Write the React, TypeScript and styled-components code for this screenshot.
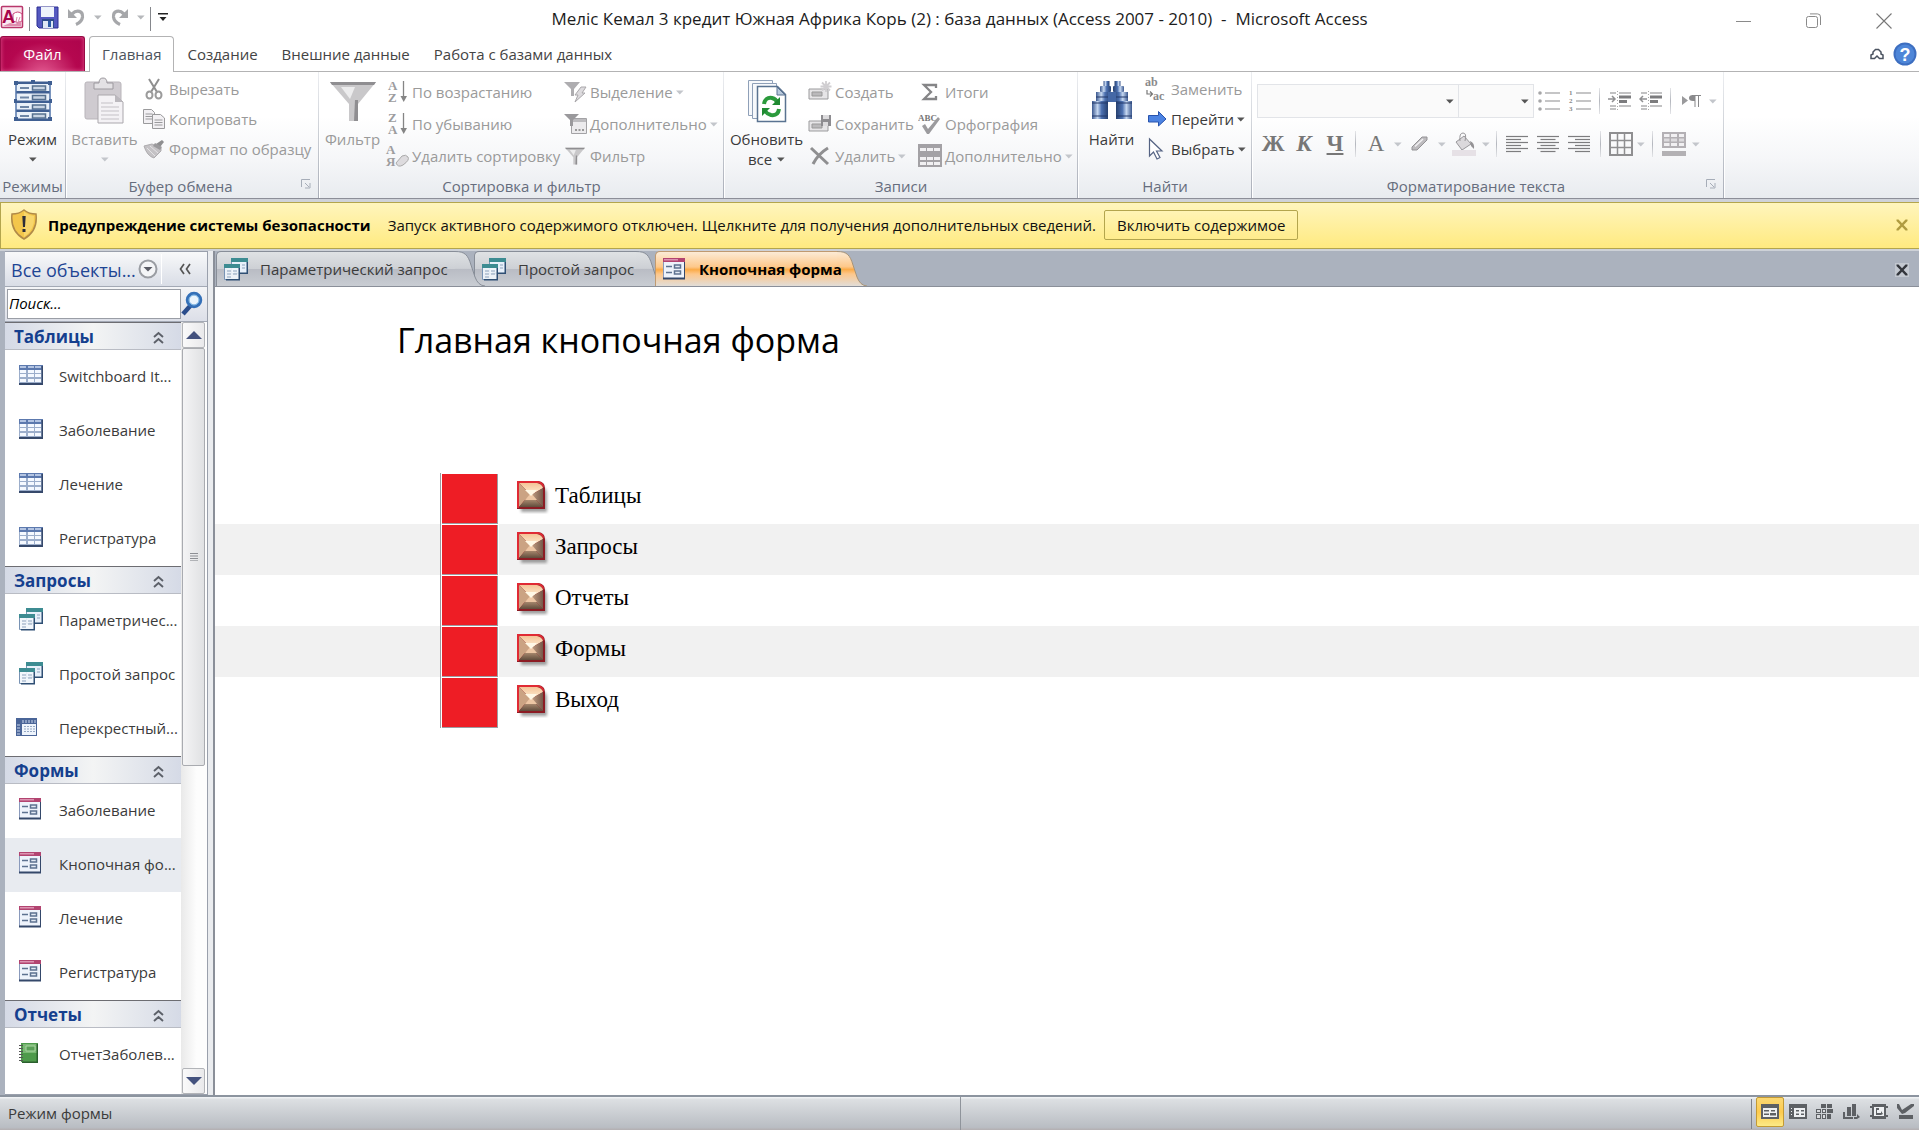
import React from "react";
import styled, { createGlobalStyle, css } from "styled-components";

const GlobalStyle = createGlobalStyle`
  *, *::before, *::after { box-sizing: border-box; }
  body { margin: 0; background: #fff; }
  body, button, input, select {
    font-family: "Open Sans", "Noto Sans", sans-serif;
    font-size: 15px;
    line-height: 20px;
    color: #3b3b3b;
  }
  button { border: 0; padding: 0; background: none; white-space: nowrap; }
  svg { display: block; flex: none; }
`;

const Screen = styled.div`
  height: 100vh;
  display: flex;
  flex-direction: column;
  overflow: hidden;
  background: #fff;
`;

/* ---------- title bar ---------- */

const TitleBar = styled.header`
  flex: none;
  height: 36px;
  display: grid;
  grid-template-columns: 1fr auto 1fr;
  align-items: center;
`;
const QuickAccess = styled.div`
  display: flex;
  align-items: center;
  height: 30px;
  padding-bottom: 2px;
`;
const QuickButton = styled.button<{ $w: number }>`
  width: ${(p) => p.$w}px;
  height: 28px;
  display: flex;
  align-items: center;
  justify-content: center;
`;
const QuickDivider = styled.span`
  width: 1px;
  height: 24px;
  margin: 4px 5px 0;
  background: #85878c;
`;
const Title = styled.h1`
  margin: 0;
  padding-top: 2px;
  font-size: 17px;
  font-weight: 400;
  line-height: 24px;
  white-space: pre;
  color: #1c1c1c;
`;
const WindowControls = styled.div`
  display: flex;
  justify-content: flex-end;
`;
const WindowButton = styled.button`
  width: 70px;
  height: 36px;
  display: flex;
  align-items: center;
  justify-content: center;
  padding-top: 6px;
`;

/* ---------- ribbon tabs ---------- */

const TabStrip = styled.nav`
  flex: none;
  height: 36px;
  display: flex;
  align-items: stretch;
  border-bottom: 1px solid #b3b3b4;
`;
const FileTab = styled.button`
  width: 85px;
  color: #fff;
  border: 1px solid #980b45;
  border-bottom: 0;
  border-radius: 3px 3px 0 0;
  background: radial-gradient(ellipse at 50% 110%, #e0588f 0, #b5074f 60%, #ac044b 100%);
  box-shadow: inset 0 0 4px #e2508c;
`;
const RibbonTab = styled.button<{ $active?: boolean }>`
  padding: 0 12px;
  color: #444;
  ${(p) =>
    p.$active &&
    css`
      margin: 0 1px -1px 4px;
      padding: 0 12px 1px;
      color: #4c535c;
      background: #fff;
      border: 1px solid #b3b3b4;
      border-bottom: 0;
      border-radius: 4px 4px 0 0;
    `}
`;
const TabStripEnd = styled.div`
  margin-left: auto;
  display: flex;
  align-items: center;
  gap: 9px;
  padding-right: 2px;
`;

/* ---------- ribbon ---------- */

const Ribbon = styled.section`
  flex: none;
  height: 130px;
  display: flex;
  border-bottom: 3px solid #cfd2d9;
  background: linear-gradient(#8c8e98, #8c8e98) bottom / 100% 1px no-repeat,
    linear-gradient(#fff 0, #fff 35%, #f5f6f8 70%, #e8ebef 100%);
`;
const Group = styled.div<{ $w: number }>`
  flex: none;
  width: ${(p) => p.$w}px;
  display: flex;
  flex-direction: column;
  padding-right: 2px;
  background: linear-gradient(#eceef1, #a9aeb8) right 1px top / 1px calc(100% - 1px) no-repeat,
    linear-gradient(#fff, #fff) right / 1px calc(100% - 2px) no-repeat;
`;
const GroupBody = styled.div`
  height: 104px;
  display: flex;
`;
const GroupFooter = styled.div<{ $launcher?: boolean }>`
  position: relative;
  padding-right: ${(p) => (p.$launcher ? 24 : 0)}px;
  text-align: center;
  line-height: 20px;
  color: #666d7d;
`;
const Launcher = styled.button`
  position: absolute;
  right: 7px;
  top: 3px;
`;
const LargeButton = styled.button<{ $w: number; $off?: boolean }>`
  flex: none;
  width: ${(p) => p.$w}px;
  height: 100px;
  display: flex;
  flex-direction: column;
  align-items: center;
  padding-top: 8px;
  color: ${(p) => (p.$off ? "#9a9a9a" : "#3b3b3b")};
`;
const LargeIcon = styled.span`
  flex: none;
  height: 42px;
  margin-bottom: 7px;
  display: flex;
  align-items: center;
`;
const ArrowLine = styled.span`
  height: 20px;
  display: flex;
  align-items: center;
  gap: 5px;
`;
const Column = styled.div<{ $row: number; $w?: number }>`
  flex: none;
  width: ${(p) => (p.$w ? p.$w + "px" : "auto")};
  display: grid;
  grid-auto-rows: ${(p) => p.$row}px;
  align-content: start;
  justify-items: start;
  padding-top: ${(p) => (p.$row === 30 ? 2 : 4)}px;
`;
const SmallButton = styled.button<{ $off?: boolean }>`
  display: flex;
  align-items: center;
  gap: 3px;
  color: ${(p) => (p.$off ? "#9a9a9a" : "#3b3b3b")};
`;

const Format = styled.div`
  padding: 12px 0 0 4px;
`;
const ToolRow = styled.div`
  display: flex;
  align-items: center;
  height: 34px;
  & + & { margin-top: 9px; }
`;
const Combo = styled.label<{ $w: number }>`
  position: relative;
  width: ${(p) => p.$w}px;
  height: 34px;
  & + & { margin-left: -1px; }
  select {
    width: 100%;
    height: 100%;
    appearance: none;
    border: 1px solid #e2e4e8;
    border-radius: 0;
    background: #fafafa;
  }
  svg { position: absolute; right: 5px; top: 15px; }
`;
const Tool = styled.button<{ $w: number }>`
  width: ${(p) => p.$w}px;
  height: 30px;
  display: flex;
  align-items: center;
  justify-content: center;
`;
const Glyph = styled.span<{ $light?: boolean }>`
  font-family: "Liberation Serif", serif;
  font-size: 23px;
  font-weight: ${(p) => (p.$light ? 400 : 700)};
  line-height: 24px;
  color: #777;
`;
const ToolDivider = styled.span<{ $w: number }>`
  width: ${(p) => p.$w}px;
  height: 26px;
  background: linear-gradient(#e4e5e8, #b4b7be, #e4e5e8) center / 1px 100% no-repeat;
`;

/* ---------- message bar ---------- */

const MessageBar = styled.section`
  flex: none;
  height: 47px;
  display: flex;
  align-items: center;
  padding: 0 10px 1px 9px;
  border: 1px solid #b3a54d;
  border-right: 0;
  background: linear-gradient(#fff5bd, #ffea80);
  color: #111;
  strong { margin: 0 17px 0 10px; color: #000; }
`;
const EnableButton = styled.button`
  height: 30px;
  margin-left: 8px;
  padding: 0 12px;
  border: 1px solid #b3a54d;
  border-radius: 2px;
  background: linear-gradient(#fff4b5, #ffec8c);
  color: #111;
`;
const BarClose = styled.button`
  margin-left: auto;
`;

/* ---------- workspace ---------- */

const Workspace = styled.main`
  flex: 1;
  min-height: 0;
  display: flex;
  border-top: 2px solid #cdd1d7;
  background: #abb2be;
  padding-left: 5px;
`;
const NavPane = styled.aside`
  flex: none;
  width: 203px;
  display: flex;
  flex-direction: column;
  border: 1px solid #9aa0ac;
  border-left: 0;
  background: #fff;
`;
const NavHeader = styled.div`
  flex: none;
  height: 35px;
  display: flex;
  align-items: center;
  padding-left: 6px;
  border-bottom: 1px solid #a3a9b5;
  background: linear-gradient(#f8f9fa, #d9dde6);
`;
const NavTitle = styled.button`
  flex: 1;
  display: flex;
  align-items: center;
  justify-content: space-between;
  font-size: 18px;
  line-height: 26px;
  color: #1e4594;
  > span { padding-top: 2px; }
`;
const NavCollapse = styled.button`
  width: 46px;
  height: 30px;
  margin-left: 3px;
  border-left: 1px solid #fff;
  display: flex;
  align-items: center;
  justify-content: center;
`;
const SearchRow = styled.div`
  flex: none;
  height: 35px;
  display: flex;
  align-items: center;
  padding-left: 2px;
  border-bottom: 1px solid #a3a9b5;
  background: linear-gradient(#f4f5f7, #dcdfe8);
`;
const SearchInput = styled.input`
  width: 174px;
  height: 30px;
  padding: 0 1px 3px;
  border: 1px solid #9a9ea6;
  background: #fff;
  font-style: italic;
  color: #000;
  &::placeholder { color: #000; opacity: 1; }
`;
const NavBody = styled.div`
  flex: 1;
  min-height: 0;
  display: flex;
`;
const NavList = styled.div`
  flex: 1;
  min-width: 0;
  overflow: hidden;
`;
const CategoryHeader = styled.button`
  width: 100%;
  height: 28px;
  display: flex;
  align-items: center;
  justify-content: space-between;
  padding: 2px 17px 0 9px;
  border-top: 1px solid #6d6d72;
  border-bottom: 1px solid #b9bcc4;
  background: linear-gradient(90deg, #d5dae6, #f3f4f4 50%, #d5dae6);
  font-size: 17px;
  font-weight: 700;
  color: #153f8e;
`;
const CategoryItems = styled.ul`
  list-style: none;
  margin: 0;
  padding: 0;
`;
const NavItem = styled.button<{ $selected?: boolean }>`
  width: 100%;
  height: 54px;
  display: grid;
  grid-template-columns: 40px 1fr;
  align-items: center;
  padding: 0 0 2px 14px;
  text-align: left;
  background: ${(p) => (p.$selected ? "#e8ebf0" : "#fff")};
  svg { margin-bottom: 2px; }
`;
const ScrollBar = styled.div`
  flex: none;
  width: 26px;
  display: flex;
  flex-direction: column;
  padding: 0 2px 0 1px;
  background: linear-gradient(90deg, #e9e9e9, #fdfdfd 60%);
`;
const ScrollButton = styled.button`
  flex: none;
  height: 26px;
  display: flex;
  align-items: center;
  justify-content: center;
  border: 1px solid #b2b4b8;
  border-radius: 2px;
  background: linear-gradient(90deg, #fafafa, #e9e9eb);
`;
const Thumb = styled.div`
  height: 418px;
  margin-bottom: auto;
  display: flex;
  align-items: center;
  justify-content: center;
  border: 1px solid #a9abb0;
  border-radius: 2px;
  background: linear-gradient(90deg, #f4f4f5, #e0e1e3);
`;
const Splitter = styled.div`
  flex: none;
  width: 7px;
  border-right: 2px solid #8a8f99;
  background: #eaecef;
`;
const Documents = styled.section`
  flex: 1;
  min-width: 0;
  display: flex;
  flex-direction: column;
`;
const DocTabs = styled.div`
  flex: none;
  height: 36px;
  display: flex;
  align-items: flex-end;
  padding-left: 1px;
  border-bottom: 1px solid #8a8f99;
`;
const greyTab = "linear-gradient(#dfe2e4, #cdd0d5 49%, #b9bcc4 51%, #c9cdd3)";
const activeTab = "linear-gradient(#fcebd6, #fdc88a 44%, #fbab48 52%, #fdc78b 65%, #e1ddd8)";
const DocTab = styled.button<{ $w: number; $z: number; $active?: boolean }>`
  position: relative;
  z-index: ${(p) => p.$z};
  flex: none;
  width: ${(p) => p.$w}px;
  height: 35px;
  margin-right: 19px;
  display: flex;
  align-items: center;
  gap: 12px;
  padding-left: 7px;
  border: 1px solid ${(p) => (p.$active ? "#c09a70" : "#888e98")};
  border-width: 1px 0 0 1px;
  border-top-left-radius: 5px;
  background: ${(p) => (p.$active ? activeTab : greyTab)};
  color: ${(p) => (p.$active ? "#000" : "#3b3b3b")};
  font-weight: ${(p) => (p.$active ? 700 : 400)};
  > span { position: relative; z-index: 1; }
`;
const TabTail = styled.svg`
  position: absolute;
  left: 100%;
  top: -1px;
`;
const DocClose = styled.button`
  margin: 0 10px 9px auto;
`;
const FormPage = styled.div`
  flex: 1;
  min-height: 0;
  background: #fff;
`;
const FormTitle = styled.h2`
  margin: 0;
  padding: 29px 0 95px 182px;
  font-size: 34px;
  line-height: 48px;
  font-weight: 400;
  color: #000;
`;
const MenuList = styled.ul`
  list-style: none;
  margin: 14px 0 0;
  padding: 0;
`;
const MenuRow = styled.li`
  height: 51px;
  padding-left: 225px;
  display: flex;
  &:nth-child(even) { background: #f1f1f1; }
`;
const RedCell = styled.span`
  width: 58px;
  border-left: 1px solid #9c9ca2;
  padding: 1px 0 0 1px;
  &::before {
    content: "";
    display: block;
    height: 50px;
    background: #ee1d25;
    border: 1px solid #9c9ca2;
    border-width: 0 1px 1px 0;
    outline: 1px solid #fff;
  }
`;
const MenuButton = styled.button`
  margin-left: 19px;
  padding-bottom: 5px;
  display: flex;
  align-items: center;
  gap: 5px;
  font-family: "Liberation Serif", serif;
  font-size: 23px;
  line-height: 26px;
  color: #000;
  svg { margin-top: 3px; }
`;

/* ---------- status bar ---------- */

const StatusBar = styled.footer`
  flex: none;
  height: 35px;
  display: flex;
  align-items: center;
  border-top: 2px solid #8c949f;
  background: linear-gradient(#f4f6f8 0, #dcdfe2 8%, #b9bdc3 92%, #b3aeb0 100%);
`;
const StatusText = styled.span`
  flex: 1;
  padding: 0 0 2px 8px;
`;
const StatusHalf = styled.div`
  width: 50%;
  height: 100%;
  display: flex;
  align-items: center;
  justify-content: flex-end;
  border-left: 1px solid #8f949b;
`;
const ViewDivider = styled.span`
  width: 1px;
  height: 30px;
  margin-right: 4px;
  background: #7e828a;
`;
const ViewButton = styled.button<{ $active?: boolean }>`
  width: 27px;
  height: 30px;
  display: flex;
  align-items: center;
  justify-content: center;
  margin-bottom: 3px;
  ${(p) =>
    p.$active &&
    css`
      width: 28px;
      border: 1px solid #c39a34;
      border-radius: 2px;
      background: linear-gradient(#fbd873, #fdca4e 50%, #fdea86);
    `}
`;

/* ---------- icons ---------- */

const Arrow = ({ c = "#555" }: { c?: string }) => (
  <svg width="8" height="5" viewBox="0 0 8 5"><path d="M0 0.5h7.6L3.8 4.6z" fill={c} /></svg>
);
const dim = "#c3c6cb";

const AccessLogo = () => (
  <svg width="24" height="24" viewBox="0 0 24 24">
    <rect x="1.500" y="1.500" width="21" height="21" rx="1" fill="#fbe9f0" stroke="#b8376b" strokeWidth="1.500" />
    <path d="M13 9q5-4 9 0v7q-4 3-9 0z" fill="#fff" stroke="#c9477c" strokeWidth="1" />
    <path d="M3 21h18v-5l-6 3-5-1z" fill="#e08fb0" />
    <path d="M17 12l-1 5M20 12l-3 8" stroke="#d98aab" />
    <text x="2" y="18" fontFamily="Liberation Sans, sans-serif" fontSize="18" fontWeight="700" fill="#a8064a">A</text>
  </svg>
);
const SaveIcon = () => (
  <svg width="23" height="23" viewBox="0 0 23 23">
    <path d="M1 1h21v21H3l-2-2z" fill="#5459c0" stroke="#2c2f91" />
    <path d="M5 1h13v10H5z" fill="#eef3fb" /><path d="M6 13h12v9H6z" fill="#2f4d8c" />
    <path d="M7 15h10v7H7z" fill="#dfe8f4" /><path d="M12 15h3v6h-3z" fill="#2c5ba6" />
  </svg>
);
const UndoIcon = ({ flip }: { flip?: boolean }) => (
  <svg width="18" height="18" viewBox="0 0 18 18">
    <g transform={flip ? "matrix(-1 0 0 1 18 0)" : undefined}>
      <path d="M5 6C10 1 16 3 15.500 9c-.5 4-3 6-6.500 7.500" fill="none" stroke="#a6a7aa" strokeWidth="3.200" />
      <path d="M1 1v9h9z" fill="#a6a7aa" />
    </g>
  </svg>
);
const CustomizeIcon = () => (
  <svg width="10" height="10" viewBox="0 0 10 10"><path d="M0 1h10v1.500H0zM1.500 5h7L5 9z" fill="#222" /></svg>
);
const MinimizeIcon = () => (
  <svg width="16" height="16" viewBox="0 0 16 16"><path d="M0 8.500h15" stroke="#8a8a8a" /></svg>
);
const RestoreIcon = () => (
  <svg width="16" height="16" viewBox="0 0 16 16" fill="none" stroke="#8a8a8a">
    <rect x="0.500" y="3.500" width="11" height="11" rx="2" /><path d="M4 .9h7.500q3 0 3 3V12" />
  </svg>
);
const CloseIcon = () => (
  <svg width="16" height="16" viewBox="0 0 16 16"><path d="M.5.5l15 15M15.500.5l-15 15" stroke="#777" strokeWidth="1.100" /></svg>
);
const MinRibbonIcon = () => (
  <svg width="14" height="12" viewBox="0 0 14 12" fill="#fff" stroke="#4b5360" strokeWidth="1.500">
    <path d="M1 10.500V7l2-1V4l2.500-2.500h3L11 4v2l2 1v3.500H9.500L7 8l-2.500 2.500z" />
  </svg>
);
const HelpIcon = () => (
  <svg width="24" height="24" viewBox="0 0 24 24">
    <circle cx="12" cy="12" r="11.500" fill="#3d6ec0" /><circle cx="12" cy="12" r="9.500" fill="#4e86d8" />
    <text x="12" y="18.500" textAnchor="middle" fontFamily="Liberation Sans, sans-serif" fontWeight="700" fontSize="18" fill="#fff">?</text>
  </svg>
);
const ModeIcon = () => (
  <svg width="40" height="42" viewBox="0 0 40 42">
    <rect x="3" y="3" width="35" height="37" fill="#eaf1f9" />
    {[3, 12.5, 22, 31].map((y) => (
      <g key={y}>
        <rect x="3" y={y - 1.5} width="34" height="2.500" fill="#3f5f92" />
        <path d={`M7 ${y + 4}h9v2H7z`} fill="#6e86a6" />
        <rect x="19.500" y={y + 3} width="13" height="4" fill="#c8d4e3" stroke="#56708f" strokeWidth="1.500" />
      </g>
    ))}
    <rect x="3" y="38.500" width="34" height="2.500" fill="#3f5f92" />
    <path d="M3 2v38M37 2v38" stroke="#5577aa" strokeWidth="1.500" />
    <path d="M1 1h4v4H1zM35 1h4v4h-4zM1 37h4v4H1zM35 37h4v4h-4zM1 19h3v4H1zM36 19h3v4h-3zM18 0h4v3h-4z" fill="#3f5f92" />
  </svg>
);
const PasteIcon = () => (
  <svg width="42" height="48" viewBox="0 0 42 48">
    <rect x="1" y="5" width="36" height="37" rx="2" fill="#cfcbd0" stroke="#b9b5ba" />
    <path d="M10 9V6h5q0-5 4-5t4 5h6v6H10z" fill="#e3e1e4" stroke="#9c999e" />
    <path d="M14 18h17l8 7v21H14z" fill="#f4f2f5" stroke="#aaa7ac" />
    <path d="M31 18v7h8z" fill="#bbb8bd" />
    <path d="M17 26h12M17 30h18M17 34h18M17 38h18M17 42h18" stroke="#c4c1c6" />
  </svg>
);
const CutIcon = () => (
  <svg width="24" height="22" viewBox="0 0 24 22">
    <path d="M7 1l8 13M17 1L9 14" stroke="#8f8f8f" strokeWidth="2" />
    <ellipse cx="7.500" cy="17" rx="3" ry="3.500" fill="none" stroke="#9b9b9b" strokeWidth="2" />
    <ellipse cx="16.500" cy="17" rx="3" ry="3.500" fill="none" stroke="#9b9b9b" strokeWidth="2" />
  </svg>
);
const CopyIcon = () => (
  <svg width="24" height="22" viewBox="0 0 24 22" fill="#f2f0f3" stroke="#9a9a9c">
    <path d="M1.500 1.500h8l3 3v11h-11z" /><path d="M3.500 6h7M3.500 8.500h7M3.500 11h7" />
    <path d="M10.500 6.500h8l4 3.500v10.500h-12z" /><path d="M12.500 12h8M12.500 14.500h8M12.500 17h8" />
  </svg>
);
const BrushIcon = () => (
  <svg width="24" height="20" viewBox="0 0 24 20">
    <path d="M20 1l2 2-4 5-4-3z" fill="#8e8e90" /><path d="M2 7l8-2 9 4 0 3-7 7q-7-2-10-12z" fill="#c4c2c5" stroke="#aeacaf" />
    <path d="M13 4l7 4-2 3-7-4z" fill="#9b9a9d" /><path d="M5 9l8 8M8 7l8 7" stroke="#e4e3e5" />
  </svg>
);
const Funnel = ({ w, h }: { w: number; h: number }) => (
  <svg width={w} height={h} viewBox="0 0 48 42">
    <path d="M1 2h46L29 24v17H20V24z" fill="#c9c8ca" />
    <path d="M1 2h46l-2 3H3z" fill="#8f8e91" /><path d="M26 20h3v21h-4z" fill="#8f8e91" /><path d="M12 7h14l-5 12z" fill="#ececed" />
  </svg>
);
const SortIcon = ({ a, b }: { a: string; b: string }) => (
  <svg width="24" height="26" viewBox="0 0 24 26" fontFamily="Liberation Serif, serif" fontSize="13" fontWeight="700" fill="#9d9d9f">
    <text x="3" y="11">{a}</text><text x="3" y="23">{b}</text>
    <path d="M18.500 2v18" stroke="#858585" strokeWidth="1.300" /><path d="M15.500 17h6.500l-3.300 6z" fill="#858585" />
  </svg>
);
const ClearSortIcon = () => (
  <svg width="24" height="26" viewBox="0 0 24 26" fontFamily="Liberation Serif, serif" fontSize="13" fontWeight="700" fill="#9d9d9f">
    <text x="1" y="11">A</text><text x="1" y="23">Я</text>
    <path d="M11 20l6-7q4-2 6 1t-5 8q-5 3-7-2z" fill="#dddbde" stroke="#aaa" />
  </svg>
);
const SelectionIcon = () => (
  <svg width="24" height="24" viewBox="0 0 24 24">
    <path d="M1 2h16l-6 7v7H8V9z" fill="#aeadb0" /><path d="M18 7h5l-4 6h3l-10 9 3-7h-3z" fill="#dddbde" stroke="#aaa8ab" />
  </svg>
);
const AdvancedIcon = () => (
  <svg width="24" height="24" viewBox="0 0 24 24">
    <path d="M8.500 6.500h15v15h-15z" fill="#ecebed" stroke="#a3a2a5" /><path d="M9 7h14v3H9z" fill="#bdbcbf" />
    <path d="M1 2h15l-6 6v6H7V8z" fill="#9a999c" /><path d="M12 17h2v2h-2zM15.500 17h2v2h-2zM19 17h2v2h-2z" fill="#999" />
  </svg>
);
const RefreshIcon = () => (
  <svg width="42" height="44" viewBox="0 0 42 44">
    <g fill="#f7f9fc" stroke="#8fa0b8"><path d="M2.500 1.500h24v35h-24z" /><path d="M6.500 4.500h24v35h-24z" /></g>
    <path d="M11.500 7.500h20l8 8v27h-28z" fill="#fff" stroke="#5a7391" strokeWidth="1.500" /><path d="M31 8v8h8z" fill="#b9c9dc" stroke="#5a7391" />
    <path d="M18 25q1-7 8-6 4 1 5 4M33 30q-1 7-8 6-4-1-6-4" fill="none" stroke="#2b9a3c" strokeWidth="4" />
    <path d="M34 18v8h-8zM16 37v-8h8z" fill="#1f8a32" />
  </svg>
);
const FormRecord = ({ kind }: { kind: "new" | "save" }) => (
  <svg width="24" height="22" viewBox="0 0 24 22">
    <path d="M1 8h19v10H1z" fill="#e6e5e7" stroke="#9b9b9d" /><path d="M4 11h10v4H4z" fill="#bab9bb" stroke="#999" />
    {kind === "new" ? (
      <path d="M18 0v11M12.500 5.500h11M14 1.500l8 8M22 1.500l-8 8" stroke="#d0ced1" strokeWidth="1.800" />
    ) : (
      <g><path d="M13 2h10v11H13z" fill="#8d8c90" /><path d="M15 2h6v4h-6zM15 9h5v4h-5z" fill="#dcdbdd" /></g>
    )}
  </svg>
);
const DeleteIcon = () => (
  <svg width="24" height="20" viewBox="0 0 24 20"><path d="M3 2l17 16M20 2Q10 8 5 18" stroke="#8f8f91" strokeWidth="3" fill="none" /></svg>
);
const SigmaIcon = () => (
  <svg width="24" height="20" viewBox="0 0 24 20"><path d="M18 6V3H6l7 7-7 7h12v-3" fill="none" stroke="#858587" strokeWidth="2.300" /></svg>
);
const SpellIcon = () => (
  <svg width="24" height="24" viewBox="0 0 24 24">
    <text x="0" y="9" fontFamily="Liberation Serif, serif" fontWeight="700" fontSize="9" fill="#777">ABC</text>
    <path d="M4 14l3-2 3 5L20 5l2 2-11 15H9z" fill="#9c9b9e" />
  </svg>
);
const GridIcon = () => (
  <svg width="24" height="24" viewBox="0 0 24 24">
    <path d="M0 0h24v23H0z" fill="#a3a1a5" />
    <path d="M2 4h6v3H2zM9 4h6v3H9zM16 4h6v3h-6zM2 13h6v3H2zM9 13h6v3H9zM16 13h6v3h-6zM2 18h6v3H2zM9 18h6v3H9zM16 18h6v3h-6z" fill="#f1f0f2" />
  </svg>
);
const BinocularsIcon = () => (
  <svg width="42" height="42" viewBox="0 0 42 42">
    <defs>
      <linearGradient id="bin" x1="0" x2="1"><stop offset="0" stopColor="#3b588f" /><stop offset=".35" stopColor="#c6d8f1" /><stop offset=".6" stopColor="#4c70b0" /><stop offset="1" stopColor="#26406f" /></linearGradient>
    </defs>
    {[0, 1].map((i) => (
      <g key={i} transform={i ? "matrix(-1 0 0 1 42 0)" : undefined}>
        <rect x="12.500" y="1" width="6" height="6" fill="url(#bin)" /><rect x="9" y="6" width="11" height="6" rx="1" fill="url(#bin)" />
        <path d="M5 12h15v9H5z" fill="url(#bin)" /><path d="M1 21h16v18H1z" fill="url(#bin)" />
        <path d="M1 36h16M5 17h14M1 23h16" stroke="#22396a" strokeWidth="1.200" />
      </g>
    ))}
    <path d="M17 12h8v10h-8z" fill="#4568a6" />
  </svg>
);
const ReplaceIcon = () => (
  <svg width="24" height="28" viewBox="0 0 24 28" fontFamily="Liberation Serif, serif" fontWeight="700" fontSize="12" fill="#8a8a8c">
    <text x="1" y="11">ab</text><text x="9" y="25">ac</text>
    <path d="M3 15v4h5M6 16.500L8.500 19 6 21.500" fill="none" stroke="#777" strokeWidth="1.200" />
  </svg>
);
const GoToIcon = () => (
  <svg width="24" height="18" viewBox="0 0 24 18"><path d="M4.500 5.500h10v-4L22 9l-7.500 7v-4h-10z" fill="#4c83e2" stroke="#2853ad" /></svg>
);
const CursorIcon = () => (
  <svg width="24" height="24" viewBox="0 0 24 24"><path d="M5.500 2v17l4-4 3.500 7 3-1.500-3.500-6.500H18z" fill="#fff" stroke="#556383" strokeWidth="1.200" /></svg>
);
const LauncherIcon = () => (
  <svg width="10" height="10" viewBox="0 0 10 10"><path d="M.5 8V.5H9M4 4l4 4M9 4v5H4" fill="none" stroke="#a6adb8" /></svg>
);
const ListIcon = ({ numbered }: { numbered?: boolean }) => (
  <svg width="24" height="24" viewBox="0 0 24 24">
    <path d="M8 4h15M8 12h15M8 20h15" stroke="#8b8b8d" strokeWidth="1.200" />
    {[4, 12, 20].map((y, i) =>
      numbered ? (
        <text key={y} x="1" y={y + 2} fontSize="7" fontWeight="700" fontFamily="Liberation Serif, serif" fill="#888">{i + 1}</text>
      ) : (
        <circle key={y} cx="3" cy={y} r="1.800" fill="#a6a6a8" />
      )
    )}
  </svg>
);
const IndentIcon = ({ out }: { out?: boolean }) => (
  <svg width="24" height="20" viewBox="0 0 24 20">
    <path d="M2 2h6M11 2h12M2 15h6M11 15h12M2 18h6" stroke="#868688" strokeWidth="1.200" />
    <path d="M11 4.500h12v3H11zM11 9h8v3h-8z" fill="#7c7c7e" /><path d="M9.500 0v20" stroke="#aaa" strokeDasharray="1 2" />
    <path d={out ? "M8 8H1m3-3L1 8l3 3" : "M0 8h7M4 5l3 3-3 3"} fill="none" stroke="#909092" strokeWidth="1.500" />
  </svg>
);
const ParagraphIcon = () => (
  <svg width="20" height="14" viewBox="0 0 20 14"><path d="M1 2v9l6-4.500z" fill="#9a9a9c" /><path d="M11 1.500h9M14 1v12M17.500 1v12" stroke="#878789" /><path d="M14 1h-2q-4 0-4 3t4 3h2z" fill="#8a8a8c" /></svg>
);
const EraserIcon = () => (
  <svg width="20" height="18" viewBox="0 0 20 18"><path d="M2 12L12 2h5v3L7 15H2z" fill="#bdbbbe" stroke="#949396" /><path d="M5 11.500L13 4" stroke="#f2f1f3" strokeWidth="1.500" /></svg>
);
const BucketIcon = () => (
  <svg width="24" height="24" viewBox="0 0 24 24">
    <path d="M4 10l8-6 7 8-9 6z" fill="#dbd9dc" stroke="#98979a" /><path d="M8 9q-1-8 3-8t2 8" fill="none" stroke="#98979a" />
    <path d="M18 9q5 2 4 8l-3-3z" fill="#939295" /><path d="M0 18h24v6H0z" fill="#e6e1e6" />
  </svg>
);
const AlignIcon = ({ kind }: { kind: "l" | "c" | "r" }) => (
  <svg width="22" height="18" viewBox="0 0 22 18" stroke="#7d7d7f" strokeWidth="1.200">
    {[1, 4, 7, 10, 13, 16].map((y, i) => {
      const len = i % 2 ? 15 : 22;
      const x = kind === "l" ? 0 : kind === "c" ? (22 - len) / 2 : 22 - len;
      return <path key={y} d={`M${x} ${y + 0.5}h${len}`} />;
    })}
  </svg>
);
const BordersIcon = () => (
  <svg width="24" height="24" viewBox="0 0 24 24" fill="none" stroke="#8f8f91"><rect x="1" y="1" width="22" height="22" strokeWidth="2" /><path d="M8.500 1v22M15.500 1v22M1 8.500h22M1 15.500h22" strokeWidth="1.500" /></svg>
);
const RowsIcon = () => (
  <svg width="24" height="24" viewBox="0 0 24 24"><path d="M0 0h24v16H0z" fill="#b3b0b4" /><path d="M2 2h5.500v3H2zM9 2h6v3H9zM17 2h5v3h-5zM2 11h5.500v3H2zM9 11h6v3H9zM17 11h5v3h-5z" fill="#f1f0f2" /><path d="M2 6.500h5.500v3H2zM9 6.500h6v3H9zM17 6.500h5v3h-5z" fill="#dddbde" /><path d="M0 19h24v5H0z" fill="#b3b1b4" /></svg>
);
const ShieldIcon = () => (
  <svg width="28" height="32" viewBox="0 0 28 32">
    <path d="M14 1q5 4 12 4 2 17-12 25Q0 22 2 5q7 0 12-4z" fill="#f3c64b" stroke="#b08a48" strokeWidth="1.500" />
    <path d="M14 3q4 3 10 4 1 14-10 21z" fill="#f8d66c" />
    <path d="M12.300 7h3.400l-.7 11h-2zM12.500 20h3v3h-3z" fill="#2d2d38" />
  </svg>
);
const SmallX = ({ c, halo }: { c: string; halo?: string }) => (
  <svg width="14" height="14" viewBox="0 0 14 14">{halo && <path d="M0 0h14v14H0z" fill={halo} />}<path d="M1.500 1.500h2L7 5.300l3.500-3.800h2V3L8.600 7l3.900 4v1.500h-2L7 8.700l-3.500 3.800h-2V11l3.900-4-3.900-4z" fill={c} /></svg>
);
const DropCircle = () => (
  <svg width="20" height="20" viewBox="0 0 20 20"><circle cx="10" cy="10" r="8.500" fill="#f4f5f7" stroke="#9a9da3" strokeWidth="2" /><path d="M5.500 8h9L10 12.500z" fill="#5a5c66" /></svg>
);
const ChevronsLeft = () => (
  <svg width="12" height="12" viewBox="0 0 12 12" fill="none" stroke="#555" strokeWidth="1.700"><path d="M5 1L1.500 6 5 11M11 1L7.500 6 11 11" /></svg>
);
const ChevronsUp = () => (
  <svg width="11" height="13" viewBox="0 0 11 13" fill="none" stroke="#5c6069" strokeWidth="1.900"><path d="M1 6l4.500-4L10 6M1 12l4.500-4L10 12" /></svg>
);
const MagnifierIcon = () => (
  <svg width="22" height="26" viewBox="0 0 22 26"><path d="M2 23l8-9" stroke="#2b4d8c" strokeWidth="4.500" /><circle cx="13" cy="9" r="6.500" fill="#eaf4fc" stroke="#3470b8" strokeWidth="3.500" /><circle cx="13" cy="9" r="5" fill="none" stroke="#8cc2ec" /></svg>
);
const TableIcon = () => (
  <svg width="24" height="20" viewBox="0 0 24 20">
    <path d="M0 0h24v19.500H0z" fill="#5c79ae" /><path d="M0 5h23v13H0z" fill="#9caecb" />
    {[5, 9, 14].map((y) => <path key={y} d={`M1 ${y}h6v3H1zM9 ${y}h6v3H9zM16 ${y}h6v3h-6z`} fill="#f5f9ff" />)}
    <path d="M1 1h6v2H1zM9 1h6v2H9zM16 1h6v2h-6z" fill="#b3c4e2" /><path d="M0 18h22.500V1H24v19H0z" fill="#36496b" />
  </svg>
);
const QueryIcon = () => (
  <svg width="24" height="23" viewBox="0 0 24 23">
    <path d="M7.500.5h16v15h-16z" fill="#e7f0fa" stroke="#7893b4" /><path d="M7 0h17v4H7z" fill="#3d8c92" /><path d="M22.500 4H24v12H10v-1.500h12.500z" fill="#2f4f74" />
    <path d="M.5 6.500h15v15H.5z" fill="#f1f6fc" fillOpacity=".9" stroke="#7893b4" /><path d="M0 6h16v4H0z" fill="#3d8c92" /><path d="M14.500 10H16v12.500H2V21h12.500z" fill="#2f4f74" />
    <path d="M3 13h4M9 13h4M3 16h4M9 16h4M3 19h4M18 7h3M18 10h3" stroke="#8ba1bb" strokeWidth="1.200" />
  </svg>
);
const CrosstabIcon = () => (
  <svg width="24" height="19" viewBox="3 0 24 19" overflow="visible">
    <path d="M0 0h21v18H0z" fill="#4a6598" /><path d="M6 6h14v11H6z" fill="#eef4fc" />
    <path d="M7 2v3M10 2v3M13 2v3M16 2v3M19 2v3M1 7h3M1 10h3M1 13h3M1 16h3" stroke="#c9d6ec" /><path d="M8 8.500h11M8 11h11M8 13.500h11" stroke="#95a8c4" strokeDasharray="2 1" />
  </svg>
);
const FormIcon = () => (
  <svg width="24" height="22" viewBox="0 0 24 22">
    <path d="M.5.5h21v20H.5z" fill="#eef3fb" stroke="#8a9abc" /><path d="M0 0h22v4H0z" fill="#b24470" /><path d="M1 1h14v1.500H1z" fill="#dc93b1" />
    <path d="M0 19.500h22v2H0zM21 4h1v16h-1z" fill="#34486a" /><path d="M3 8.500h6M3 14.500h6" stroke="#5d7290" strokeWidth="1.500" />
    <path d="M11.500 7h6v3h-6zM11.500 13h6v3h-6z" fill="#e3eaf4" stroke="#5d7290" strokeWidth="1.500" />
  </svg>
);
const ReportIcon = () => (
  <svg width="24" height="20" viewBox="0 0 24 20">
    <path d="M2 0h17v19H2z" fill="#4e9a4b" /><path d="M4 1h14v9H4z" fill="#79b873" /><path d="M7 3h9v5H7z" fill="#5aa057" stroke="#a9d4a1" /><path d="M17.500 1H19v19H3v-1.500h14.500z" fill="#2a5f2d" />
    {[2, 5, 8, 11, 14, 17].map((y) => <path key={y} d={`M0 ${y + 0.5}h4`} stroke="#555" />)}
  </svg>
);
const PyramidIcon = () => (
  <svg width="33" height="33" viewBox="0 0 33 33">
    <defs>
      <filter id="soft" x="-20%" y="-20%" width="150%" height="150%"><feGaussianBlur stdDeviation="1.500" /></filter>
      <linearGradient id="pt" x2="0" y2="1"><stop offset="0" stopColor="#f4c497" /><stop offset="1" stopColor="#fff0d8" /></linearGradient>
      <linearGradient id="pb" x2="0" y2="1"><stop offset="0" stopColor="#a5866c" /><stop offset="1" stopColor="#604c3c" /></linearGradient>
      <linearGradient id="pr" x2="1" y2="0"><stop offset="0" stopColor="#c6a286" /><stop offset="1" stopColor="#75594a" /></linearGradient>
    </defs>
    <path d="M4 5h18q8 1 8 8v18H4z" fill="#777" opacity=".7" filter="url(#soft)" />
    <path d="M0 0h21q7 1 7 7v21H0z" fill="#8c1c24" /><path d="M0 0h21q5 1 6 5l-1 2Q25 2 20 2H2v25H0z" fill="#e02a34" />
    <path d="M2 2h18q5 1 6 5L14 14z" fill="url(#pt)" /><path d="M2 2l12 12-7 6-5 6z" fill="#cba383" />
    <path d="M26 7v19l-6-6-6-6z" fill="url(#pr)" /><path d="M2 26l6-7h11l7 7z" fill="url(#pb)" />
    <path d="M14 12l6 7H8z" fill="#edc6a4" /><path d="M8 9h12l-6 6z" fill="#fff8e6" />
  </svg>
);
const Grip = () => (
  <svg width="8" height="8" viewBox="0 0 8 8"><path d="M0 .5h8M0 3h8M0 5.500h8M0 7.900h8" stroke="#8d8f94" /></svg>
);
const ScrollArrow = ({ down }: { down?: boolean }) => (
  <svg width="16" height="8" viewBox="0 0 16 8"><path d={down ? "M0 0h16L8 8z" : "M0 8h16L8 0z"} fill="#44527e" /></svg>
);
const viewPaths = [
  "M0 0h18v15H0zM2 4v9h14V4zM3 6h5v1.500H3zM10 6h4v1.500h-4zM3 9.500h5V11H3zM9 9h6v2.500H9z",
  "M0 0h18v15H0zM5 4v9h11V4zM2 4v1h1V4zM2 7v1h1V7zM2 10v1h1v-1zM7 6h3v1.500H7zM12 6h3v1.500h-3zM7 9.500h3V11H7zM12 9.500h3V11h-3z",
  "M5 0h5v4H5zM11 0h5v4h-5zM0 5h5v4H0zM6 5h4v4H6zM11 5h6v4h-6zM0 10h5v5H0zM6 10h4v5H6zM11 10h4v5h-4z",
  "M0 8h2v5h8v2H0zM4 3h4v9H4zM9 0h4v12H9zM14 10l3 3-3 2h-3v-2h3z",
  "M2 0h14v15H2zM4 3v9h10V3zM0 2h2v2H0zM0 11h2v2H0zM16 2h2v2h-2zM16 11h2v2h-2zM6 4h3v2H7v3h4V7l2 3-2 1H6z",
  "M0 0h2l3 6 9-6h3v2L8 9 5 10 0 4zM2 11h14v4H2z",
];
const viewFills = ["M2 4h14v9H2z", "M2 4h14v9H2z", "M1 6h3v2H1zM7 6h2v2H7zM1 11h3v3H1zM7 11h2v3H7z", "M5 5h2v6H5z", "M4 3h10v9H4z", ""];
const ViewIcon = ({ i }: { i: number }) => (
  <svg width="18" height="16" viewBox="0 0 18 16">
    <path d={viewFills[i]} fill="#eef0f2" />
    <path d={viewPaths[i]} fill="#5d6064" fillRule="evenodd" />
    {i === 2 && <path d={viewFills[2]} fill="#d9dbde" />}
  </svg>
);

/* ---------- data ---------- */

const navGroups = [
  { title: "Таблицы", icon: TableIcon, items: ["Switchboard It...", "Заболевание", "Лечение", "Регистратура"] },
  { title: "Запросы", icon: QueryIcon, items: ["Параметричес...", "Простой запрос", "Перекрестный..."] },
  { title: "Формы", icon: FormIcon, items: ["Заболевание", "Кнопочная фо...", "Лечение", "Регистратура"] },
  { title: "Отчеты", icon: ReportIcon, items: ["ОтчетЗаболев..."] },
];
const docTabs = [
  { title: "Параметрический запрос", w: 239, z: 2, icon: QueryIcon },
  { title: "Простой запрос", w: 162, z: 1, icon: QueryIcon },
  { title: "Кнопочная форма", w: 182, z: 3, icon: FormIcon, active: true },
];
const menu = ["Таблицы", "Запросы", "Отчеты", "Формы", "Выход"];
const views = ["Режим формы", "Режим таблицы", "Сводная таблица", "Сводная диаграмма", "Режим макета", "Конструктор"];

const Small = ({ icon, text, off, drop }: { icon: React.ReactNode; text: string; off?: boolean; drop?: boolean }) => (
  <SmallButton $off={off}>
    {icon}
    <span>{text}</span>
    {drop && <Arrow c={off ? dim : "#555"} />}
  </SmallButton>
);

const Tail = ({ active }: { active?: boolean }) => {
  const id = active ? "tailActive" : "tailGrey";
  const stops = active
    ? [["0", "#fcebd6"], [".44", "#fdc88a"], [".52", "#fbab48"], [".65", "#fdc78b"], ["1", "#e1ddd8"]]
    : [["0", "#dfe2e4"], [".49", "#cdd0d5"], [".51", "#b9bcc4"], ["1", "#c9cdd3"]];
  return (
    <TabTail width="31" height="35" viewBox="0 0 31 35">
      <defs>
        <linearGradient id={id} x2="0" y2="1">
          {stops.map(([o, c]) => <stop key={o} offset={o} stopColor={c} />)}
        </linearGradient>
      </defs>
      <path d="M-1 .5h1C10 .5 13 4 16 14l4 12q3 8.500 10 9H-1z" fill={`url(#${id})`} />
      <path d="M-1 .5h1C10 .5 13 4 16 14l4 12q3 8.500 10 9" fill="none" stroke={active ? "#a89478" : "#888e98"} />
    </TabTail>
  );
};

export default function App() {
  return (
    <Screen>
      <GlobalStyle />
      <TitleBar>
        <QuickAccess>
          <QuickButton $w={24} aria-label="Access"><AccessLogo /></QuickButton>
          <QuickDivider />
          <QuickButton $w={24} aria-label="Сохранить"><SaveIcon /></QuickButton>
          <QuickButton $w={34} aria-label="Отменить"><UndoIcon /></QuickButton>
          <QuickButton $w={10} aria-label="Список отмены"><Arrow c="#b6b8bb" /></QuickButton>
          <QuickButton $w={34} aria-label="Вернуть"><UndoIcon flip /></QuickButton>
          <QuickButton $w={8} aria-label="Список возврата"><Arrow c="#b6b8bb" /></QuickButton>
          <QuickDivider />
          <QuickButton $w={14} aria-label="Настройка панели"><CustomizeIcon /></QuickButton>
        </QuickAccess>
        <Title>{"Меліс Кемал 3 кредит Южная Африка Корь (2) : база данных (Access 2007 - 2010)  -  Microsoft Access"}</Title>
        <WindowControls>
          <WindowButton aria-label="Свернуть"><MinimizeIcon /></WindowButton>
          <WindowButton aria-label="Восстановить"><RestoreIcon /></WindowButton>
          <WindowButton aria-label="Закрыть"><CloseIcon /></WindowButton>
        </WindowControls>
      </TitleBar>

      <TabStrip>
        <FileTab>Файл</FileTab>
        <RibbonTab $active>Главная</RibbonTab>
        <RibbonTab>Создание</RibbonTab>
        <RibbonTab>Внешние данные</RibbonTab>
        <RibbonTab>Работа с базами данных</RibbonTab>
        <TabStripEnd>
          <button aria-label="Свернуть ленту"><MinRibbonIcon /></button>
          <button aria-label="Справка"><HelpIcon /></button>
        </TabStripEnd>
      </TabStrip>

      <Ribbon>
        <Group $w={67}>
          <GroupBody>
            <LargeButton $w={65}><LargeIcon><ModeIcon /></LargeIcon><span>Режим</span><ArrowLine><Arrow /></ArrowLine></LargeButton>
          </GroupBody>
          <GroupFooter>Режимы</GroupFooter>
        </Group>

        <Group $w={253}>
          <GroupBody>
            <LargeButton $w={75} $off><LargeIcon><PasteIcon /></LargeIcon><span>Вставить</span><ArrowLine><Arrow c={dim} /></ArrowLine></LargeButton>
            <Column $row={30}>
              <Small off icon={<CutIcon />} text="Вырезать" />
              <Small off icon={<CopyIcon />} text="Копировать" />
              <Small off icon={<BrushIcon />} text="Формат по образцу" />
            </Column>
          </GroupBody>
          <GroupFooter $launcher>Буфер обмена<Launcher aria-label="Буфер обмена"><LauncherIcon /></Launcher></GroupFooter>
        </Group>

        <Group $w={405}>
          <GroupBody>
            <LargeButton $w={65} $off><LargeIcon><Funnel w={48} h={42} /></LargeIcon><span>Фильтр</span></LargeButton>
            <Column $row={32} $w={178}>
              <Small off icon={<SortIcon a="A" b="Z" />} text="По возрастанию" />
              <Small off icon={<SortIcon a="Z" b="A" />} text="По убыванию" />
              <Small off icon={<ClearSortIcon />} text="Удалить сортировку" />
            </Column>
            <Column $row={32}>
              <Small off drop icon={<SelectionIcon />} text="Выделение" />
              <Small off drop icon={<AdvancedIcon />} text="Дополнительно" />
              <Small off icon={<Funnel w={24} h={18} />} text="Фильтр" />
            </Column>
          </GroupBody>
          <GroupFooter>Сортировка и фильтр</GroupFooter>
        </Group>

        <Group $w={354}>
          <GroupBody>
            <LargeButton $w={83}><LargeIcon><RefreshIcon /></LargeIcon><span>Обновить</span><ArrowLine>все<Arrow /></ArrowLine></LargeButton>
            <Column $row={32} $w={110}>
              <Small off icon={<FormRecord kind="new" />} text="Создать" />
              <Small off icon={<FormRecord kind="save" />} text="Сохранить" />
              <Small off drop icon={<DeleteIcon />} text="Удалить" />
            </Column>
            <Column $row={32}>
              <Small off icon={<SigmaIcon />} text="Итоги" />
              <Small off icon={<SpellIcon />} text="Орфография" />
              <Small off drop icon={<GridIcon />} text="Дополнительно" />
            </Column>
          </GroupBody>
          <GroupFooter>Записи</GroupFooter>
        </Group>

        <Group $w={174}>
          <GroupBody>
            <LargeButton $w={65}><LargeIcon><BinocularsIcon /></LargeIcon><span>Найти</span></LargeButton>
            <Column $row={30}>
              <Small off icon={<ReplaceIcon />} text="Заменить" />
              <Small drop icon={<GoToIcon />} text="Перейти" />
              <Small drop icon={<CursorIcon />} text="Выбрать" />
            </Column>
          </GroupBody>
          <GroupFooter>Найти</GroupFooter>
        </Group>

        <Group $w={472}>
          <GroupBody>
            <Format>
              <ToolRow>
                <Combo $w={202}><select aria-label="Шрифт" /><Arrow /></Combo>
                <Combo $w={76}><select aria-label="Размер шрифта" /><Arrow /></Combo>
                <Tool $w={30} aria-label="Маркеры"><ListIcon /></Tool>
                <Tool $w={31} aria-label="Нумерация"><ListIcon numbered /></Tool>
                <ToolDivider $w={9} />
                <Tool $w={31} aria-label="Увеличить отступ"><IndentIcon /></Tool>
                <Tool $w={31} aria-label="Уменьшить отступ"><IndentIcon out /></Tool>
                <ToolDivider $w={9} />
                <Tool $w={32} aria-label="Направление текста"><ParagraphIcon /></Tool>
                <Tool $w={12} aria-label="Направление"><Arrow c={dim} /></Tool>
              </ToolRow>
              <ToolRow>
                <Tool $w={32}><Glyph>Ж</Glyph></Tool>
                <Tool $w={30}><Glyph as="em">К</Glyph></Tool>
                <Tool $w={32}><Glyph as="u">Ч</Glyph></Tool>
                <ToolDivider $w={9} />
                <Tool $w={32}><Glyph $light>A</Glyph></Tool>
                <Tool $w={12} aria-label="Цвет текста"><Arrow c={dim} /></Tool>
                <Tool $w={32} aria-label="Выделение цветом"><EraserIcon /></Tool>
                <Tool $w={12} aria-label="Цвет выделения"><Arrow c={dim} /></Tool>
                <Tool $w={32} aria-label="Заливка"><BucketIcon /></Tool>
                <Tool $w={12} aria-label="Цвет заливки"><Arrow c={dim} /></Tool>
                <ToolDivider $w={9} />
                <Tool $w={31} aria-label="По левому краю"><AlignIcon kind="l" /></Tool>
                <Tool $w={31} aria-label="По центру"><AlignIcon kind="c" /></Tool>
                <Tool $w={31} aria-label="По правому краю"><AlignIcon kind="r" /></Tool>
                <ToolDivider $w={12} />
                <Tool $w={30} aria-label="Сетка"><BordersIcon /></Tool>
                <Tool $w={10} aria-label="Вид сетки"><Arrow c={dim} /></Tool>
                <ToolDivider $w={12} />
                <Tool $w={32} aria-label="Цвет строк"><RowsIcon /></Tool>
                <Tool $w={12} aria-label="Выбор цвета строк"><Arrow c={dim} /></Tool>
              </ToolRow>
            </Format>
          </GroupBody>
          <GroupFooter $launcher>Форматирование текста<Launcher aria-label="Формат"><LauncherIcon /></Launcher></GroupFooter>
        </Group>
      </Ribbon>

      <MessageBar>
        <ShieldIcon />
        <strong>Предупреждение системы безопасности</strong>
        <span>Запуск активного содержимого отключен. Щелкните для получения дополнительных сведений.</span>
        <EnableButton>Включить содержимое</EnableButton>
        <BarClose aria-label="Закрыть сообщение"><SmallX c="#b09c40" /></BarClose>
      </MessageBar>

      <Workspace>
        <NavPane>
          <NavHeader>
            <NavTitle><span>Все объекты...</span><DropCircle /></NavTitle>
            <NavCollapse aria-label="Свернуть область"><ChevronsLeft /></NavCollapse>
          </NavHeader>
          <SearchRow>
            <SearchInput aria-label="Поиск" placeholder="Поиск..." />
            <button aria-label="Найти"><MagnifierIcon /></button>
          </SearchRow>
          <NavBody>
            <NavList>
              {navGroups.map(({ title, icon: Icon, items }) => (
                <React.Fragment key={title}>
                  <CategoryHeader>{title}<ChevronsUp /></CategoryHeader>
                  <CategoryItems>
                    {items.map((item) => (
                      <li key={item}>
                        <NavItem $selected={item === "Кнопочная фо..."}>
                          {item === "Перекрестный..." ? <CrosstabIcon /> : <Icon />}
                          <span>{item}</span>
                        </NavItem>
                      </li>
                    ))}
                  </CategoryItems>
                </React.Fragment>
              ))}
            </NavList>
            <ScrollBar>
              <ScrollButton aria-label="Вверх"><ScrollArrow /></ScrollButton>
              <Thumb><Grip /></Thumb>
              <ScrollButton aria-label="Вниз"><ScrollArrow down /></ScrollButton>
            </ScrollBar>
          </NavBody>
        </NavPane>
        <Splitter />
        <Documents>
          <DocTabs>
            {docTabs.map(({ title, w, z, icon: Icon, active }) => (
              <DocTab key={title} $w={w} $z={z} $active={active}>
                <Icon /><span>{title}</span><Tail active={active} />
              </DocTab>
            ))}
            <DocClose aria-label="Закрыть вкладку"><SmallX c="#33363c" halo="#c3c8d0" /></DocClose>
          </DocTabs>
          <FormPage>
            <FormTitle>Главная кнопочная форма</FormTitle>
            <MenuList>
              {menu.map((item) => (
                <MenuRow key={item}>
                  <RedCell />
                  <MenuButton><PyramidIcon />{item}</MenuButton>
                </MenuRow>
              ))}
            </MenuList>
          </FormPage>
        </Documents>
      </Workspace>

      <StatusBar>
        <StatusText>Режим формы</StatusText>
        <StatusHalf>
          <ViewDivider />
          {views.map((v, i) => (
            <ViewButton key={v} $active={i === 0} aria-label={v}><ViewIcon i={i} /></ViewButton>
          ))}
        </StatusHalf>
      </StatusBar>
    </Screen>
  );
}
